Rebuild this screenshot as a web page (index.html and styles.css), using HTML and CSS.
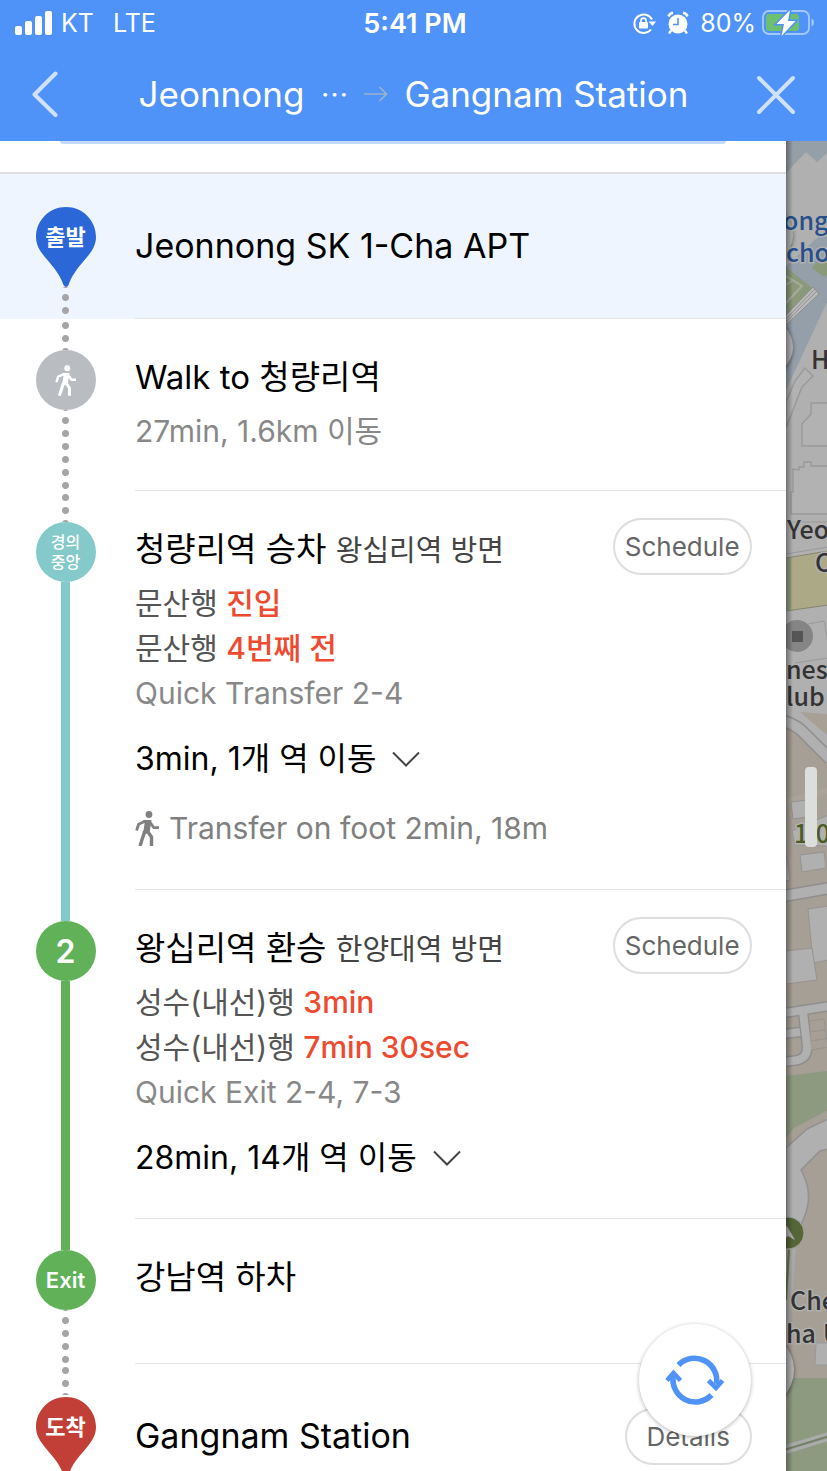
FILE: index.html
```html
<!DOCTYPE html>
<html lang="ko">

<head>
    <meta charset="UTF-8">
    <meta name="viewport" content="width=device-width, initial-scale=1.0">
    <title>Jeonnong → Gangnam Station</title>
    <link rel="stylesheet" href="styles.css">
</head>

<body>
    <svg class="defs" aria-hidden="true">
        <symbol id="walk" viewBox="0 0 24 35">
            <circle cx="14" cy="3.5" r="3.4" fill="currentColor" />
            <path d="M8 9H16.5L14.8 20.5L11 23L8.2 21.5L9.6 12.5Z" fill="currentColor" />
            <g fill="none" stroke="currentColor" stroke-width="2.8">
                <path d="M10 10.3L3.6 13.2L1.6 19.5" />
                <path d="M14.8 11L18.8 16.6H24" />
                <path d="M9.8 20L5 35" stroke-width="3.4" />
                <path d="M12 19.5L16.5 26V35" stroke-width="3.4" />
            </g>
        </symbol>
        <symbol id="pin" viewBox="0 0 60 80">
            <path d="M30 0C46.6 0 60 13.4 60 30C60 48 40 56 32.5 78Q30 82 27.5 78C20 56 0 48 0 30C0 13.4 13.4 0 30 0Z" fill="currentColor" />
        </symbol>
        <symbol id="chevron" viewBox="0 0 28 16">
            <path d="M1 1.5L14 14.5L27 1.5" fill="none" stroke="currentColor" stroke-width="2" />
        </symbol>
    </svg>

    <div class="app">
        <header class="header">
            <div class="status">
                <div class="status-left">
                    <svg width="37" height="24" viewBox="0 0 37 24" fill="#fff" aria-hidden="true">
                        <rect x="0" y="15" width="7" height="9" rx="2" />
                        <rect x="10" y="10" width="7" height="14" rx="2" />
                        <rect x="20" y="5" width="7" height="19" rx="2" />
                        <rect x="30" y="0" width="7" height="24" rx="2" />
                    </svg>
                    <span>KT</span>
                    <span class="network">LTE</span>
                </div>
                <div class="status-time">5:41 PM</div>
                <div class="status-right">
                    <svg width="24" height="24" viewBox="0 0 24 24" fill="none" stroke="#fff" stroke-width="2" aria-hidden="true">
                        <path d="M19 18.5A9.3 9.3 0 1 1 20 8.5" />
                        <path d="M16.5 10.5H24L20.5 15Z" fill="#fff" stroke="none" />
                        <rect x="7" y="11" width="9" height="6.5" rx="1" fill="#fff" stroke="none" />
                        <path d="M9 11.5V9.6A2.5 2.5 0 0 1 14 9.6V11.5" stroke-width="1.6" />
                    </svg>
                    <svg width="22" height="24" viewBox="0 0 22 24" fill="none" stroke="#fff" stroke-width="2.4" aria-hidden="true">
                        <circle cx="11" cy="13" r="9.5" fill="#fff" stroke="none" />
                        <path d="M1.5 5.5Q2.5 2.5 6 1.8M20.5 5.5Q19.5 2.5 16 1.8M4 19.5L2 22.5M18 19.5L20 22.5" />
                        <path d="M11 7V13.5H6" stroke="#4f93f8" stroke-width="1.6" />
                    </svg>
                    <div class="battery">
                        <span>80%</span>
                        <svg width="53" height="26" viewBox="0 0 53 26" aria-hidden="true">
                            <rect x="1" y="1" width="46" height="23" rx="6" fill="none" stroke="#a4c8fb" stroke-width="1.8" />
                            <rect x="4" y="4" width="33" height="17" rx="3" fill="#6cc070" />
                            <path d="M49.5 8.5Q52 9.5 52 12.5T49.5 16.5Z" fill="#a4c8fb" />
                            <path d="M28 0L14.5 14H22L19.5 26L33.5 11H26Z" fill="#fff" stroke="#4f93f8" stroke-width="3" paint-order="stroke" />
                        </svg>
                    </div>
                </div>
            </div>
            <nav class="nav">
                <button class="nav-button" aria-label="Back">
                    <svg width="27" height="47" viewBox="0 0 27 47" fill="none" stroke="#cfe1fd" stroke-width="4" stroke-linecap="round" stroke-linejoin="round">
                        <path d="M24.5 3.500L3.5 24.5L24.5 45" />
                    </svg>
                </button>
                <h1 class="nav-title">
                    <span>Jeonnong</span>
                    <span class="nav-dots">⋯</span>
                    <svg width="24" height="16" viewBox="0 0 24 16" fill="none" stroke="#9bb3cc" stroke-width="1.7" aria-hidden="true">
                        <path d="M0 8H22.5M15.5 1L22.5 8L15.5 15" />
                    </svg>
                    <span>Gangnam Station</span>
                </h1>
                <button class="nav-button" aria-label="Close">
                    <svg width="40" height="42" viewBox="0 0 40 42" fill="none" stroke="#cfe1fd" stroke-width="4" stroke-linecap="round">
                        <path d="M3 5L37 39M37 5L3 39" />
                    </svg>
                </button>
            </nav>
        </header>

        <main class="main">
            <section class="panel">
                <div class="panel-top">
                    <div class="card-edge"></div>
                </div>

                <ol class="route">
                    <li class="stop stop-start">
                        <div class="rail">
                            <span class="rail-top"></span>
                            <div class="pin pin-start">
                                <svg width="60" height="80" aria-hidden="true"><use href="#pin" /></svg>
                                <span>출발</span>
                            </div>
                            <span class="rail-line dots"></span>
                        </div>
                        <div class="content content-center">
                            <h2 class="info title">Jeonnong SK 1-Cha APT</h2>
                        </div>
                    </li>

                    <li class="stop">
                        <div class="rail">
                            <span class="rail-top dots"></span>
                            <div class="marker marker-walk">
                                <svg width="21" height="31" aria-hidden="true"><use href="#walk" /></svg>
                            </div>
                            <span class="rail-line dots"></span>
                        </div>
                        <div class="content content-walk">
                            <div class="info">
                                <h2 class="title title-station">Walk to 청량리역</h2>
                                <div class="lines">
                                    <p class="muted">27min, 1.6km 이동</p>
                                </div>
                            </div>
                        </div>
                    </li>

                    <li class="stop">
                        <div class="rail">
                            <span class="rail-top dots"></span>
                            <div class="marker marker-gyeongui">경의<br>중앙</div>
                            <span class="rail-line line-gyeongui"></span>
                        </div>
                        <div class="content">
                            <div class="info">
                                <h2 class="title title-station">청량리역 승차 <small>왕십리역 방면</small></h2>
                                <div class="lines">
                                    <p>문산행 <strong>진입</strong></p>
                                    <p>문산행 <strong>4번째 전</strong></p>
                                    <p class="muted">Quick Transfer 2-4</p>
                                </div>
                                <button class="summary">3min, 1개 역 이동
                                    <svg width="28" height="16" aria-hidden="true"><use href="#chevron" /></svg>
                                </button>
                                <p class="transfer">
                                    <svg width="24" height="35" aria-hidden="true"><use href="#walk" /></svg>
                                    Transfer on foot 2min, 18m
                                </p>
                            </div>
                            <button class="pill">Schedule</button>
                        </div>
                    </li>

                    <li class="stop">
                        <div class="rail">
                            <span class="rail-top line-gyeongui"></span>
                            <div class="marker marker-line2">2</div>
                            <span class="rail-line line-2"></span>
                        </div>
                        <div class="content">
                            <div class="info">
                                <h2 class="title title-station">왕십리역 환승 <small>한양대역 방면</small></h2>
                                <div class="lines">
                                    <p>성수(내선)행 <strong>3min</strong></p>
                                    <p>성수(내선)행 <strong>7min 30sec</strong></p>
                                    <p class="muted">Quick Exit 2-4, 7-3</p>
                                </div>
                                <button class="summary">28min, 14개 역 이동
                                    <svg width="28" height="16" aria-hidden="true"><use href="#chevron" /></svg>
                                </button>
                            </div>
                            <button class="pill">Schedule</button>
                        </div>
                    </li>

                    <li class="stop stop-short">
                        <div class="rail">
                            <span class="rail-top line-2"></span>
                            <div class="marker marker-exit">Exit</div>
                            <span class="rail-line dots"></span>
                        </div>
                        <div class="content">
                            <div class="info">
                                <h2 class="title title-station">강남역 하차</h2>
                            </div>
                        </div>
                    </li>

                    <li class="stop stop-short">
                        <div class="rail">
                            <span class="rail-top dots"></span>
                            <div class="pin pin-end">
                                <svg width="60" height="80" aria-hidden="true"><use href="#pin" /></svg>
                                <span>도착</span>
                            </div>
                        </div>
                        <div class="content content-center">
                            <h2 class="info title">Gangnam Station</h2>
                            <button class="pill pill-small">Details</button>
                        </div>
                    </li>
                </ol>

                <button class="refresh" aria-label="Refresh">
                    <svg width="60" height="52" viewBox="0 0 60 52" fill="none" stroke="#4f93f8" stroke-width="5.6">
                        <path d="M13.5 11A22.3 22.3 0 0 1 51.5 30" />
                        <path d="M46.5 41A22.3 22.3 0 0 1 8.5 21" />
                        <path d="M43.500 26.500L51 34L57.500 26.500" stroke-width="4.600" />
                        <path d="M2 26.500L8.500 19L15.500 26.500" stroke-width="4.600" />
                    </svg>
                </button>
            </section>

            <aside class="map" aria-label="Map">
                <svg class="map-canvas" viewBox="786 141 41 1330" preserveAspectRatio="xMinYMin meet">
                    <rect x="786" y="141" width="42" height="1330" fill="#b0b0b0" />
                    <!-- water -->
                    <path d="M786 141H828V152L817 162L806 152L786 173Z" fill="#959fa7" />
                    <path d="M828 228L786 266V390L828 300Z" fill="#949fa9" />
                    <!-- sports field -->
                    <path d="M786 267L812 288L786 318Z" fill="#8a9979" />
                    <path d="M812 268L824 277L828 274V258H820Z" fill="#8a9979" />
                    <path d="M786 276L802 286L786 303M786 285L792 281" fill="none" stroke="#a7ac9e" stroke-width="2" />
                    <path d="M786 315L813 287L819 294L786 325Z" fill="#b9b9b9" stroke="#8e8e88" />
                    <path d="M786 319L815 289M786 322L817 291" fill="none" stroke="#929292" />
                    <!-- buildings -->
                    <g fill="#b2b2b2" stroke="#999" stroke-width="1.4">
                        <path d="M786 402L795 381L805 368L813 376L802 387L786 428Z" />
                        <path d="M828 403H811V414L802 424V446H828" />
                        <path d="M828 466H811V462H804V467H799V470L793 469V492H791V514H828" />
                    </g>
                    <path d="M786 522H828M786 554L828 547" fill="none" stroke="#999" />
                    <path d="M786 558L828 551V605L786 611Z" fill="#aba986" stroke="#85856d" />
                    <path d="M786 558H791V610L786 611Z" fill="#8c9c83" />
                    <path d="M808 624L824 621L828 643M795 663L828 658" fill="none" stroke="#999" />
                    <!-- residential blocks -->
                    <path d="M786 714L828 762V1140L786 1148Z" fill="#a69f95" />
                    <path d="M800 712L828 736V714Z" fill="#a89f95" />
                    <path d="M786 802L828 790" stroke="#aba399" stroke-width="6" fill="none" />
                    <path d="M784 721Q797 725 806 735L830 759" fill="none" stroke="#8e8e8e" stroke-width="13" />
                    <path d="M784 721Q797 725 806 735L830 759" fill="none" stroke="#b0b0b0" stroke-width="10" />
                    <g fill="#b0b0b0" stroke="#96938f">
                        <path d="M791 802L807 800V817L793 819Z" />
                        <path d="M792 831L828 815V846L795 845Z" />
                        <path d="M800 855L824 852L826 868L802 872Z" />
                        <path d="M786 853L790 880L786 881" />
                        <path d="M808 909L828 906V960L813 963Z" />
                        <path d="M786 951L812 948L817 980L786 984Z" />
                    </g>
                    <path d="M784 896L830 888" stroke="#8e8e8e" stroke-width="13" fill="none" />
                    <path d="M784 896L830 888" stroke="#b0b0b0" stroke-width="10" fill="none" />
                    <!-- lower roads and parks -->
                    <path d="M786 1076L828 1071V1110L794 1128L786 1138Z" fill="#8d9a80" />
                    <path d="M784 1013L830 1006M803 1012L807 1046Q808 1057 798 1060L784 1062M784 1034L800 1032" fill="none" stroke="#8e8e8e" stroke-width="11" />
                    <path d="M784 1013L830 1006M803 1012L807 1046Q808 1057 798 1060L784 1062M784 1034L800 1032" fill="none" stroke="#b0b0b0" stroke-width="8" />
                    <path d="M810 1021L824 1019L828 1047L811 1050M810 1032L825 1030M811 1041L828 1038" fill="#a69f95" stroke="#96938f" />
                    <path d="M786 1148L807 1129L828 1120V1471H786Z" fill="#a69f95" />
                    <path d="M786 1148L807 1129L828 1119V1149L820 1151L801 1170Q815 1195 803 1220L795 1240L786 1242Z" fill="#b0b0b0" stroke="#919191" stroke-width="1.5" />
                    <path d="M788 1378H828V1471H786Z" fill="#8d9a80" />
                    <path d="M793 1245L787 1330" stroke="#aaa" stroke-width="6" fill="none" />
                    <path d="M789 1250L786 1300" stroke="#667a4b" stroke-width="2" fill="none" />
                    <path d="M784 1450L830 1436" stroke="#aaa" stroke-width="9" fill="none" />
                    <path d="M784 1450L830 1436" stroke="#768165" stroke-width="2" fill="none" />
                    <path d="M816 1343H828V1365H815Z" fill="#b0b0b0" stroke="#999" />
                    <!-- map controls hidden behind the panel -->
                    <g class="map-control">
                        <circle cx="764" cy="235" r="29" />
                        <circle cx="764" cy="347" r="29" />
                        <circle cx="755" cy="1370" r="39" />
                    </g>
                    <!-- places -->
                    <circle cx="797" cy="636" r="16" fill="#858585" />
                    <rect x="792" y="631" width="11" height="11" fill="#555" />
                    <circle cx="788" cy="1233" r="16" fill="#556638" stroke="#a4a59c" />
                    <path d="M787 1226L795 1240L788 1236L786 1238V1227Z" fill="#b0b0b0" />
                    <g class="map-label">
                        <g class="map-label-blue">
                            <text x="783" y="230">ong</text>
                            <text x="786" y="262">cho</text>
                        </g>
                        <text x="811" y="369">H</text>
                        <text x="787" y="539">Yeo</text>
                        <text x="815" y="572">C</text>
                        <text x="786" y="679">nes</text>
                        <text x="786" y="706">lub</text>
                        <text x="794" y="843" class="map-label-green">1.0</text>
                        <text x="790" y="1310">Che</text>
                        <text x="786" y="1343">ha U</text>
                    </g>
                </svg>
                <div class="handle"></div>
            </aside>
        </main>
    </div>
</body>

</html>
```
FILE: styles.css
```css
* {
    box-sizing: border-box;
}

body {
    font-family: Inter, "Noto Sans CJK KR", sans-serif;
    margin: 0;
    background-color: #fff;
    color: #000;
}

h1,
h2,
p,
ol {
    margin: 0;
    padding: 0;
    font-weight: 400;
}

button {
    background: none;
    border: none;
    padding: 0;
    font: inherit;
    color: inherit;
    cursor: pointer;
}

svg {
    display: block;
    flex: none;
}

.defs {
    position: absolute;
    width: 0;
    height: 0;
}

.app {
    height: 100vh;
    display: flex;
    flex-direction: column;
    overflow: hidden;
}

/* header */
.header {
    background-color: #4f93f8;
    color: #fff;
    flex: none;
}

.status {
    display: grid;
    grid-template-columns: 1fr auto 1fr;
    align-items: center;
    height: 46px;
    padding: 0 12px 0 15px;
    font-size: 25px;
}

.status-left,
.status-right,
.battery {
    display: flex;
    align-items: center;
    gap: 9px;
}

.status-right {
    justify-content: flex-end;
    gap: 11px;
}

.battery {
    gap: 6px;
}

.network {
    margin-left: 10px;
}

.status-time {
    font-size: 27px;
    font-weight: 600;
}

.nav {
    display: flex;
    align-items: center;
    justify-content: space-between;
    height: 95px;
    padding: 0 31px;
}

.nav-button {
    width: 40px;
}

.nav-title {
    display: flex;
    align-items: center;
    gap: 16px;
    font-size: 35px;
}

.nav-dots {
    font-size: 28px;
}

/* route panel */
.main {
    flex: 1;
    min-height: 0;
    display: flex;
}

.panel {
    position: relative;
    flex: 0 0 95%;
    overflow: hidden;
}

.panel-top {
    height: 33px;
    padding: 0 60px;
    border-bottom: 2px solid #dedede;
}

.card-edge {
    height: 3px;
    background-color: #c3dafb;
    border-radius: 0 0 12px 12px;
}

.route {
    list-style: none;
}

.stop {
    display: grid;
    grid-template-columns: 131px 1fr;
    column-gap: 4px;
}

.stop-start {
    background-color: #eef5fe;
}

.stop-start,
.stop-short {
    min-height: 145px;
}

.rail {
    display: flex;
    flex-direction: column;
    align-items: center;
}

.rail-top {
    width: 9px;
    height: 31px;
}

.rail-line {
    width: 9px;
    flex: 1;
}

.dots {
    background: radial-gradient(circle, #a5a5a5 3px, transparent 4px) 0 0 / 9px 13px;
}

.rail-line.dots {
    background-position: 0 4px;
}

.line-gyeongui {
    background-color: #84caca;
}

.line-2 {
    background-color: #60b158;
}

.marker {
    width: 60px;
    height: 60px;
    border-radius: 50%;
    display: flex;
    align-items: center;
    justify-content: center;
    color: #fff;
    font-weight: 600;
}

.marker-walk {
    background-color: #b9bdc2;
}

.marker-gyeongui {
    background-color: #84caca;
    font-size: 16px;
    line-height: 20px;
    font-weight: 500;
}

.marker-line2 {
    background-color: #60b158;
    font-size: 32px;
}

.marker-exit {
    background-color: #60b158;
    font-size: 22px;
}

.pin {
    display: grid;
    margin-top: 2px;
    z-index: 1;
}

.pin svg,
.pin span {
    grid-area: 1 / 1;
}

.pin span {
    color: #fff;
    font-size: 22px;
    line-height: 60px;
    text-align: center;
    font-weight: 700;
}

.pin-start {
    color: #2c67d8;
}

.pin-end {
    color: #c13f36;
}

.content {
    display: flex;
    align-items: flex-start;
    border-bottom: 1px solid #e4e4e4;
    padding: 0 34px 38px 0;
}

.content-walk {
    padding-bottom: 36px;
}

.content-center {
    align-items: center;
    padding-bottom: 0;
}

.info {
    flex: 1;
}

.content:not(.content-center) .info {
    padding-top: 36px;
}

.title {
    font-size: 34px;
    line-height: 44px;
}

.title-station {
    height: 44px;
    font-size: 33px;
}

.title small {
    font-size: 29px;
    line-height: 1;
    color: #444;
}

.lines {
    margin-top: 10px;
    font-size: 30px;
    line-height: 45px;
    color: #555;
}

.lines p {
    height: 45px;
}

.lines strong {
    font-weight: 500;
    color: #ee4a2f;
}

.lines .muted {
    color: #888;
}

.summary {
    display: flex;
    align-items: center;
    gap: 16px;
    margin-top: 21px;
    font-size: 32px;
    line-height: 44px;
}

.summary svg {
    color: #444;
}

.transfer {
    display: flex;
    align-items: center;
    gap: 10px;
    margin-top: 25px;
    font-size: 30px;
    line-height: 45px;
    color: #808080;
}

.pill {
    flex: none;
    width: 139px;
    height: 57px;
    margin-top: 27px;
    border: 2px solid #dedede;
    border-radius: 29px;
    font-size: 26px;
    color: #666;
}

.content-center .pill {
    margin-top: 0;
}

.pill-small {
    width: 127px;
}

.refresh {
    position: absolute;
    right: 35px;
    bottom: 35px;
    width: 112px;
    height: 112px;
    border-radius: 50%;
    background-color: #fff;
    box-shadow: 0 1px 4px rgba(0, 0, 0, 0.3);
    display: flex;
    align-items: center;
    justify-content: center;
}

/* map strip */
.map {
    position: relative;
    flex: 1;
    overflow: hidden;
    background-color: #b0b0b0;
}

.map::after {
    content: "";
    position: absolute;
    inset: 0 auto 0 0;
    width: 7px;
    background: linear-gradient(to right, rgba(0, 0, 0, 0.35), transparent);
}

.map-canvas {
    width: 100%;
    height: 100%;
}

.map-control {
    fill: #b0b0b0;
    filter: drop-shadow(0 1px 2px rgba(0, 0, 0, 0.5));
}

.map-label {
    font-family: "Noto Sans CJK KR", sans-serif;
    font-size: 25px;
    font-weight: 500;
    fill: #333;
    stroke: #b0b0b0;
    stroke-width: 3px;
    paint-order: stroke;
}

.map-label-blue {
    fill: #274f89;
}

.map-label-green {
    fill: #4d5b22;
}

.handle {
    position: absolute;
    top: 626px;
    right: 10px;
    width: 12px;
    height: 80px;
    border-radius: 4px;
    background-color: #dcdedc;
}
```
